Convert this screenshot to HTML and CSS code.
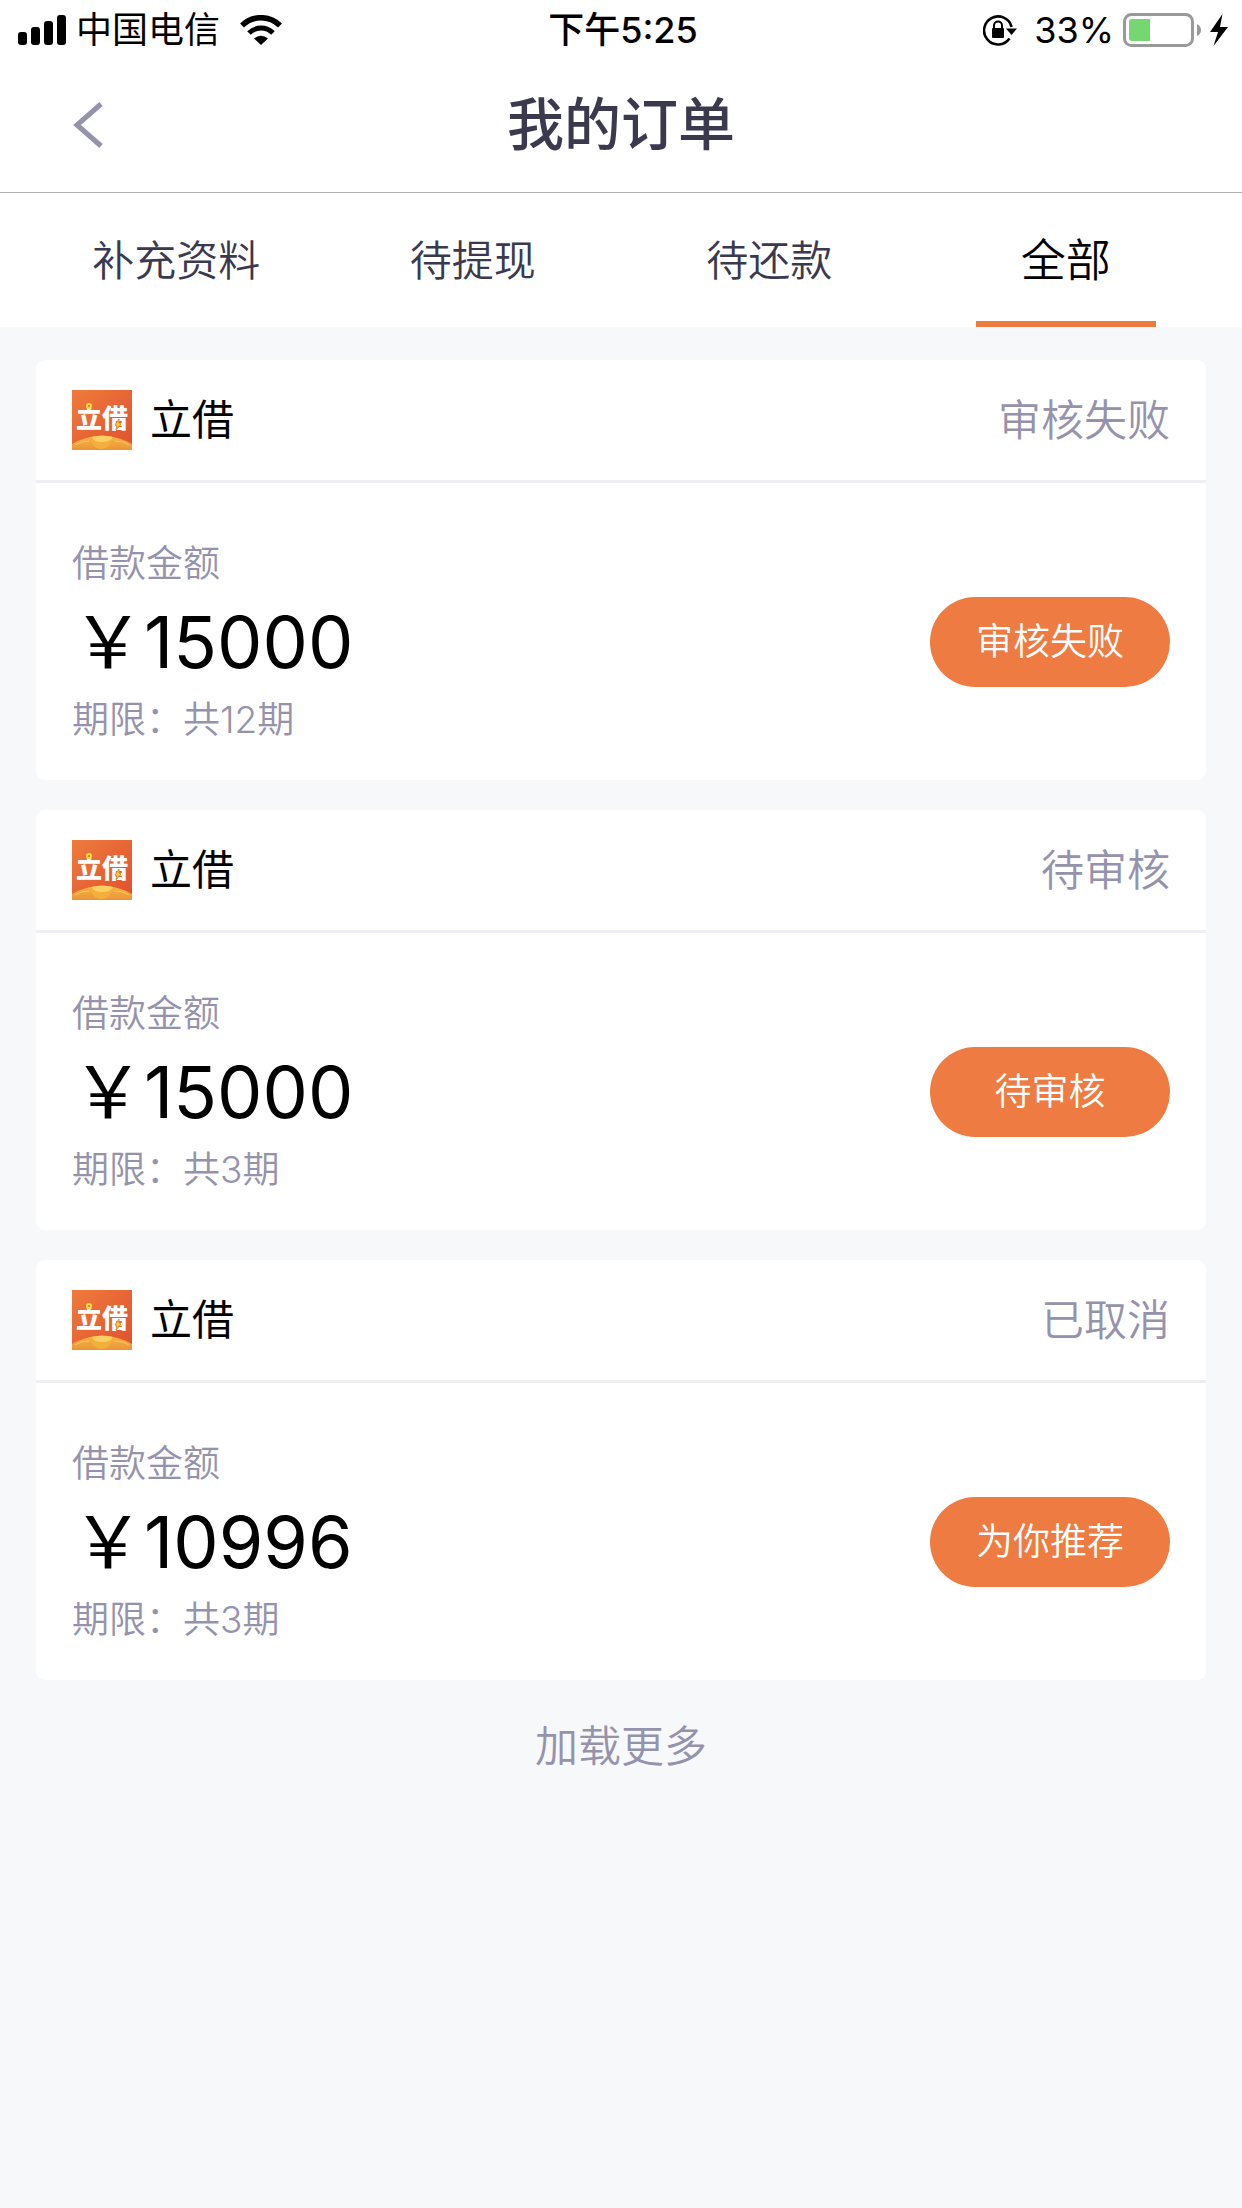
FILE: index.html
```html
<!DOCTYPE html>
<html lang="zh-CN">
<head>
    <meta charset="UTF-8">
    <meta name="viewport" content="width=device-width, initial-scale=1.0">
    <title>我的订单</title>
    <link rel="stylesheet" href="styles.css">
</head>
<body>
    <!-- logo, shared by all the cards -->
    <svg class="defs" aria-hidden="true">
        <defs>
            <linearGradient id="logo-bg" x1="0" y1="0" x2="1" y2="1">
                <stop offset="0" stop-color="#ee7b3b"/>
                <stop offset="1" stop-color="#e0502f"/>
            </linearGradient>
            <linearGradient id="logo-gold" x1="0" y1="0" x2="0" y2="1">
                <stop offset="0" stop-color="#f6b544"/>
                <stop offset="1" stop-color="#ea9438"/>
            </linearGradient>
            <symbol id="logo" viewBox="0 0 60 60">
                <rect width="60" height="60" fill="url(#logo-bg)"/>
                <path d="M0 54Q14 46 30 46T60 54V60H0Z" fill="url(#logo-gold)"/>
                <path d="M15 49Q17 46 30 46T45 49Q39 50 38 55Q34 59 29 59T21 55Q20 50 15 49Z" fill="#f3ae3c"/>
                <path d="M20 47Q30 44 41 47Q39 52 30 52T20 47Z" fill="#fbcf63"/>
                <path d="M3 55Q9 51 17 51M43 51Q52 51 57 55" fill="none" stroke="#f9c65c" stroke-width="1"/>
                <text x="4" y="38" class="logo-text">立借</text>
                <circle cx="17" cy="16" r="2" fill="#e8682f" stroke="#f7dc3c" stroke-width="2"/>
                <path d="M47 29L43 35L45 36L44 40L49 34L47 33Z" fill="#f7cf35" stroke="#e8882c" stroke-width="1"/>
            </symbol>
        </defs>
    </svg>

    <div class="status-bar">
        <div class="status-left">
            <svg width="48" height="30" viewBox="0 0 48 30" aria-hidden="true">
                <rect x="0" y="17" width="9" height="13" rx="3"/>
                <rect x="13" y="12" width="9" height="18" rx="3"/>
                <rect x="26" y="6" width="9" height="24" rx="3"/>
                <rect x="39" y="0" width="9" height="30" rx="3"/>
            </svg>
            <span class="carrier">中国电信</span>
            <svg width="42" height="30" viewBox="0 0 42 30" aria-hidden="true">
                <path d="M2 10.500A27 27 0 0 1 40 10.500" fill="none" stroke="#000" stroke-width="5.500"/>
                <path d="M9 18A17 17 0 0 1 33 18" fill="none" stroke="#000" stroke-width="5"/>
                <path d="M14 23.500Q21 18 28 23.500L21 30Z"/>
            </svg>
        </div>
        <span class="time">下午5:25</span>
        <div class="status-right">
            <svg width="34" height="32" viewBox="0 0 34 32" aria-hidden="true">
                <path d="M26.500 24.500A14 14 0 1 1 28.600 13" fill="none" stroke="#000" stroke-width="2.600"/>
                <path d="M23 14.500H34L28.500 21Z"/>
                <rect x="9" y="14" width="12" height="10" rx="1"/>
                <path d="M11 15V11.500A4 4 0 0 1 19 11.500V15" fill="none" stroke="#000" stroke-width="2"/>
            </svg>
            <span class="percent">33%</span>
            <svg width="78" height="34" viewBox="0 0 78 34" aria-hidden="true">
                <rect x="1.500" y="1.500" width="68" height="31" rx="7" fill="none" stroke="#999" stroke-width="3"/>
                <path d="M74 11Q78 13 78 17T74 23Z" fill="#999"/>
                <path d="M9 6H27V28H9Q6 28 6 25V9Q6 6 9 6Z" fill="#76d672"/>
            </svg>
            <svg width="18" height="32" viewBox="0 0 18 32" aria-hidden="true">
                <path d="M12.500 0L0 18H8L3.500 32L18 13H10Z"/>
            </svg>
        </div>
    </div>

    <header class="header">
        <button class="back" type="button" aria-label="返回">
            <svg width="30" height="46" viewBox="0 0 30 46" aria-hidden="true">
                <path d="M28 2L4 23L28 44" fill="none" stroke="#9593ab" stroke-width="5"/>
            </svg>
        </button>
        <h1>我的订单</h1>
    </header>

    <nav class="tabs">
        <a href="#info">补充资料</a>
        <a href="#withdraw">待提现</a>
        <a href="#repay">待还款</a>
        <a class="active" href="#all">全部</a>
    </nav>

    <main class="orders">
        <section class="card">
            <div class="card-head">
                <svg class="logo" aria-hidden="true"><use href="#logo"/></svg>
                <h2>立借</h2>
                <span class="state">审核失败</span>
            </div>
            <div class="card-body">
                <div class="info">
                    <p class="label">借款金额</p>
                    <p class="amount">￥15000</p>
                    <p class="label">期限：共12期</p>
                </div>
                <button class="btn" type="button">审核失败</button>
            </div>
        </section>

        <section class="card">
            <div class="card-head">
                <svg class="logo" aria-hidden="true"><use href="#logo"/></svg>
                <h2>立借</h2>
                <span class="state">待审核</span>
            </div>
            <div class="card-body">
                <div class="info">
                    <p class="label">借款金额</p>
                    <p class="amount">￥15000</p>
                    <p class="label">期限：共3期</p>
                </div>
                <button class="btn" type="button">待审核</button>
            </div>
        </section>

        <section class="card">
            <div class="card-head">
                <svg class="logo" aria-hidden="true"><use href="#logo"/></svg>
                <h2>立借</h2>
                <span class="state">已取消</span>
            </div>
            <div class="card-body">
                <div class="info">
                    <p class="label">借款金额</p>
                    <p class="amount">￥10996</p>
                    <p class="label">期限：共3期</p>
                </div>
                <button class="btn" type="button">为你推荐</button>
            </div>
        </section>

        <button class="more" type="button">加载更多</button>
    </main>
</body>
</html>
```

FILE: styles.css
```css
* {
    box-sizing: border-box;
    margin: 0;
    padding: 0;
}
body {
    font-family: Inter, "Noto Sans CJK SC", sans-serif;
    background-color: #f7f8fa;
    color: #000;
}
button {
    border: none;
    background: none;
    font-family: inherit;
    cursor: pointer;
}
a {
    text-decoration: none;
}
svg {
    display: block;
    flex-shrink: 0;
}
.defs {
    position: absolute;
    width: 0;
    height: 0;
}

/* status bar */
.status-bar {
    display: grid;
    grid-template-columns: 1fr auto 1fr;
    align-items: center;
    height: 60px;
    padding: 0 14px 0 18px;
    background-color: #fff;
    font-size: 36px;
    line-height: 60px;
}
.status-left, .status-right {
    display: flex;
    align-items: center;
}
.status-left {
    gap: 10px;
}
.carrier {
    margin-right: 10px;
}
.time {
    font-weight: 500;
}
.status-right {
    justify-content: flex-end;
    gap: 9px;
}
.percent {
    margin-left: 8px;
}

/* header */
.header {
    display: grid;
    grid-template-columns: 1fr auto 1fr;
    align-items: center;
    height: 133px;
    padding: 0 73px 2px;
    background-color: #fff;
    border-bottom: 1px solid #b2b2b2;
}
.back {
    justify-self: start;
}
.header h1 {
    font-size: 57px;
    font-weight: 500;
    line-height: 80px;
    color: #3a394e;
}

/* tabs */
.tabs {
    display: grid;
    grid-template-columns: repeat(4, 1fr);
    justify-items: center;
    padding: 0 28px;
    background-color: #fff;
}
.tabs a {
    min-width: 180px;
    padding-top: 8px;
    border-bottom: 6px solid transparent;
    font-size: 42px;
    font-weight: 350;
    line-height: 120px;
    text-align: center;
    color: #3a394e;
}
.tabs .active {
    border-color: #ee7b41;
    font-size: 45px;
    color: #000;
}

/* order cards */
.orders {
    display: flex;
    flex-direction: column;
    gap: 30px;
    padding: 33px 36px;
}
.card {
    background-color: #fff;
    border-radius: 9px;
}
.card-head {
    display: flex;
    align-items: center;
    padding: 30px 36px;
    border-bottom: 3px solid #eeeef3;
}
.logo {
    width: 60px;
    height: 60px;
}
.logo-text {
    font-family: "Noto Sans CJK SC", sans-serif;
    font-size: 26px;
    font-weight: 900;
    fill: #fff;
}
.card-head h2 {
    margin-left: 18px;
    font-size: 42px;
    font-weight: 400;
    line-height: 60px;
}
.state {
    margin-left: auto;
    font-size: 43px;
    font-weight: 350;
    line-height: 60px;
    color: #9593ab;
}
.card-body {
    display: flex;
    align-items: center;
    justify-content: space-between;
    padding: 55px 36px 34px;
}
.label {
    font-size: 37px;
    font-weight: 350;
    line-height: 52px;
    color: #9593ab;
}
.amount {
    font-size: 72px;
    line-height: 104px;
}
.btn {
    min-width: 240px;
    border-radius: 45px;
    background-color: #ee7b41;
    font-size: 37px;
    font-weight: 350;
    line-height: 90px;
    color: #fff;
}
.more {
    align-self: center;
    padding: 6px 24px;
    font-size: 43px;
    font-weight: 350;
    line-height: 60px;
    color: #9593ab;
}
```
